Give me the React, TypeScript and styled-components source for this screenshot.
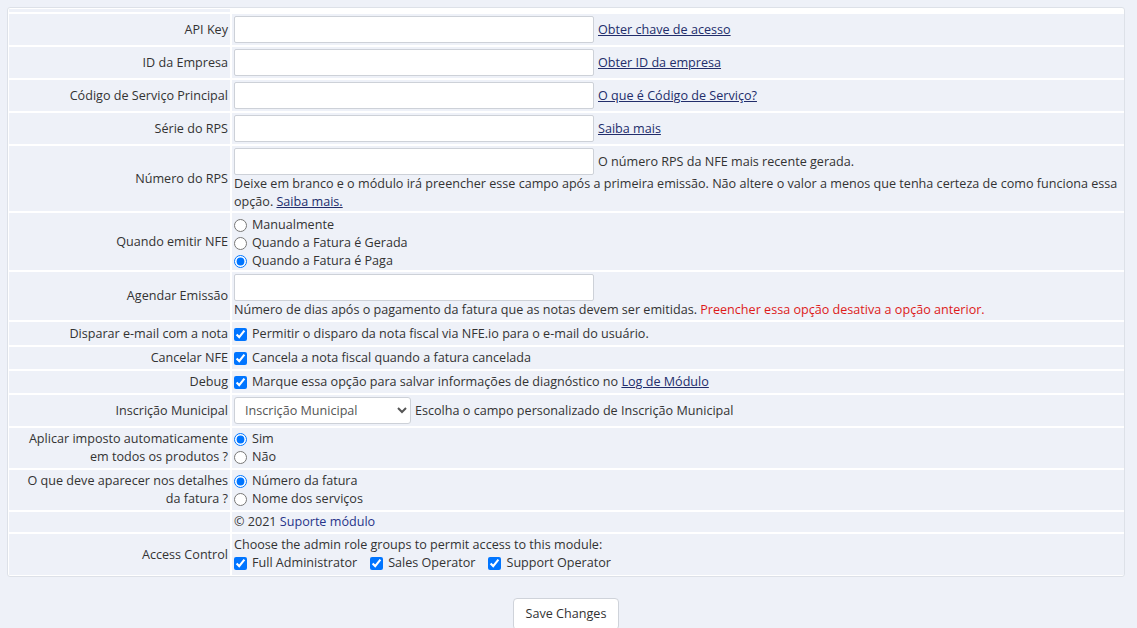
import React from "react";
import styled, { createGlobalStyle } from "styled-components";

const Global = createGlobalStyle`
  html, body {
    margin: 0;
    padding: 0;
    background: #eef1f8;
  }
  body {
    font-family: "Open Sans", "Liberation Sans", sans-serif;
    font-size: 12.6px;
    color: #333;
  }
  * { box-sizing: border-box; }
`;

const Page = styled.div`
  padding: 7px 12px 0 7px;
`;

const Box = styled.div`
  width: 1118px;
  background: #fff;
  border: 1px solid #dde1e8;
  border-radius: 3px;
  padding: 1px 0 1px 1px;
`;

const Table = styled.div`
  display: grid;
  grid-template-columns: 221px 1fr;
  column-gap: 2px;
  row-gap: 2px;
`;

const Label = styled.div<{ $h?: number }>`
  background: #eef1f8;
  display: flex;
  align-items: center;
  justify-content: flex-end;
  text-align: right;
  padding: 0 2px 0 4px;
  line-height: 18px;
  ${(p) => (p.$h !== undefined ? `height: ${p.$h}px;` : "")}
`;

const Field = styled.div<{ $pad?: string; $blank?: boolean }>`
  background: ${(p) => (p.$blank ? "transparent" : "#eef1f8")};
  padding: ${(p) => p.$pad ?? "2px"};
  line-height: 18px;
`;

const Line = styled.div`
  display: flex;
  align-items: center;
  gap: 4px;
`;

const TextInput = styled.input`
  width: 360px;
  height: 27px;
  border: 1px solid #cdd1d8;
  border-radius: 2px;
  background: #fff;
  padding: 0 8px;
  font: inherit;
  margin: 0;
`;

const Select = styled.select`
  width: 177px;
  height: 27px;
  border: 1px solid #cdd1d8;
  border-radius: 3px;
  background: #fff;
  font-family: "Open Sans", "Liberation Sans", sans-serif;
  font-size: 12.6px;
  color: #555;
  padding: 0 6px;
  margin: 0;
`;

const Hint = styled.div`
  line-height: 18px;
`;

const Link = styled.a<{ $plain?: boolean }>`
  color: ${(p) => (p.$plain ? "#27348a" : "#222d6b")};
  text-decoration: ${(p) => (p.$plain ? "none" : "underline")};
  cursor: pointer;
`;

const Warn = styled.span`
  color: #dd1a1a;
`;

const Choice = styled.label`
  display: flex;
  align-items: center;
  height: 18px;
  white-space: nowrap;
  input {
    margin: 0 5px 0 0;
    width: 13px;
    height: 13px;
  }
`;

const ChoiceRow = styled.div`
  display: flex;
  align-items: center;
  gap: 13px;
`;

const Actions = styled.div`
  display: flex;
  justify-content: center;
  width: 1118px;
  margin-top: 21px;
`;

const Button = styled.button`
  font-family: "Open Sans", "Liberation Sans", sans-serif;
  font-size: 12.6px;
  color: #333;
  background: #fff;
  border: 1px solid #cfd3da;
  border-radius: 4px;
  padding: 6px 12px;
  line-height: 18px;
  cursor: pointer;
`;

type InputRowProps = { label: string; link: string };

const InputRow = ({ label, link }: InputRowProps) => (
  <>
    <Label>{label}</Label>
    <Field>
      <Line>
        <TextInput type="text" />
        <Link>{link}</Link>
      </Line>
    </Field>
  </>
);

export default function App() {
  return (
    <>
      <Global />
      <Page>
        <Box>
          <Table>
            <Label $h={3} />
            <Field $blank $pad="0" />

            <InputRow label="API Key" link="Obter chave de acesso" />
            <InputRow label="ID da Empresa" link="Obter ID da empresa" />
            <InputRow label="Código de Serviço Principal" link="O que é Código de Serviço?" />
            <InputRow label="Série do RPS" link="Saiba mais" />

            <Label>Número do RPS</Label>
            <Field $pad="2px 2px 0">
              <Line>
                <TextInput type="text" />
                <span>O número RPS da NFE mais recente gerada.</span>
              </Line>
              <Hint>
                Deixe em branco e o módulo irá preencher esse campo após a primeira emissão. Não altere o valor a
                menos que tenha certeza de como funciona essa opção. <Link>Saiba mais.</Link>
              </Hint>
            </Field>

            <Label>Quando emitir NFE</Label>
            <Field $pad="3px 2px 0">
              <Choice>
                <input type="radio" name="emit" />
                Manualmente
              </Choice>
              <Choice>
                <input type="radio" name="emit" />
                Quando a Fatura é Gerada
              </Choice>
              <Choice>
                <input type="radio" name="emit" defaultChecked />
                Quando a Fatura é Paga
              </Choice>
            </Field>

            <Label>Agendar Emissão</Label>
            <Field $pad="2px 2px 1px">
              <Line>
                <TextInput type="text" />
              </Line>
              <Hint>
                Número de dias após o pagamento da fatura que as notas devem ser emitidas.{" "}
                <Warn>Preencher essa opção desativa a opção anterior.</Warn>
              </Hint>
            </Field>

            <Label>Disparar e-mail com a nota</Label>
            <Field $pad="3px 2px 2px">
              <Choice>
                <input type="checkbox" defaultChecked />
                Permitir o disparo da nota fiscal via NFE.io para o e-mail do usuário.
              </Choice>
            </Field>

            <Label>Cancelar NFE</Label>
            <Field>
              <Choice>
                <input type="checkbox" defaultChecked />
                Cancela a nota fiscal quando a fatura cancelada
              </Choice>
            </Field>

            <Label>Debug</Label>
            <Field>
              <Choice>
                <input type="checkbox" defaultChecked />
                Marque essa opção para salvar informações de diagnóstico no&nbsp;<Link>Log de Módulo</Link>
              </Choice>
            </Field>

            <Label>Inscrição Municipal</Label>
            <Field>
              <Line>
                <Select defaultValue="im">
                  <option value="im">Inscrição Municipal</option>
                </Select>
                <span>Escolha o campo personalizado de Inscrição Municipal</span>
              </Line>
            </Field>

            <Label>
              Aplicar imposto automaticamente
              <br />
              em todos os produtos ?
            </Label>
            <Field>
              <Choice>
                <input type="radio" name="tax" defaultChecked />
                Sim
              </Choice>
              <Choice>
                <input type="radio" name="tax" />
                Não
              </Choice>
            </Field>

            <Label>
              O que deve aparecer nos detalhes
              <br />
              da fatura ?
            </Label>
            <Field>
              <Choice>
                <input type="radio" name="desc" defaultChecked />
                Número da fatura
              </Choice>
              <Choice>
                <input type="radio" name="desc" />
                Nome dos serviços
              </Choice>
            </Field>

            <Label />
            <Field $pad="1px 2px">
              © 2021 <Link $plain>Suporte módulo</Link>
            </Field>

            <Label>Access Control</Label>
            <Field $pad="2px 2px 3px">
              <div>Choose the admin role groups to permit access to this module:</div>
              <ChoiceRow>
                <Choice>
                  <input type="checkbox" defaultChecked />
                  Full Administrator
                </Choice>
                <Choice>
                  <input type="checkbox" defaultChecked />
                  Sales Operator
                </Choice>
                <Choice>
                  <input type="checkbox" defaultChecked />
                  Support Operator
                </Choice>
              </ChoiceRow>
            </Field>
          </Table>
        </Box>
        <Actions>
          <Button type="button">Save Changes</Button>
        </Actions>
      </Page>
    </>
  );
}
